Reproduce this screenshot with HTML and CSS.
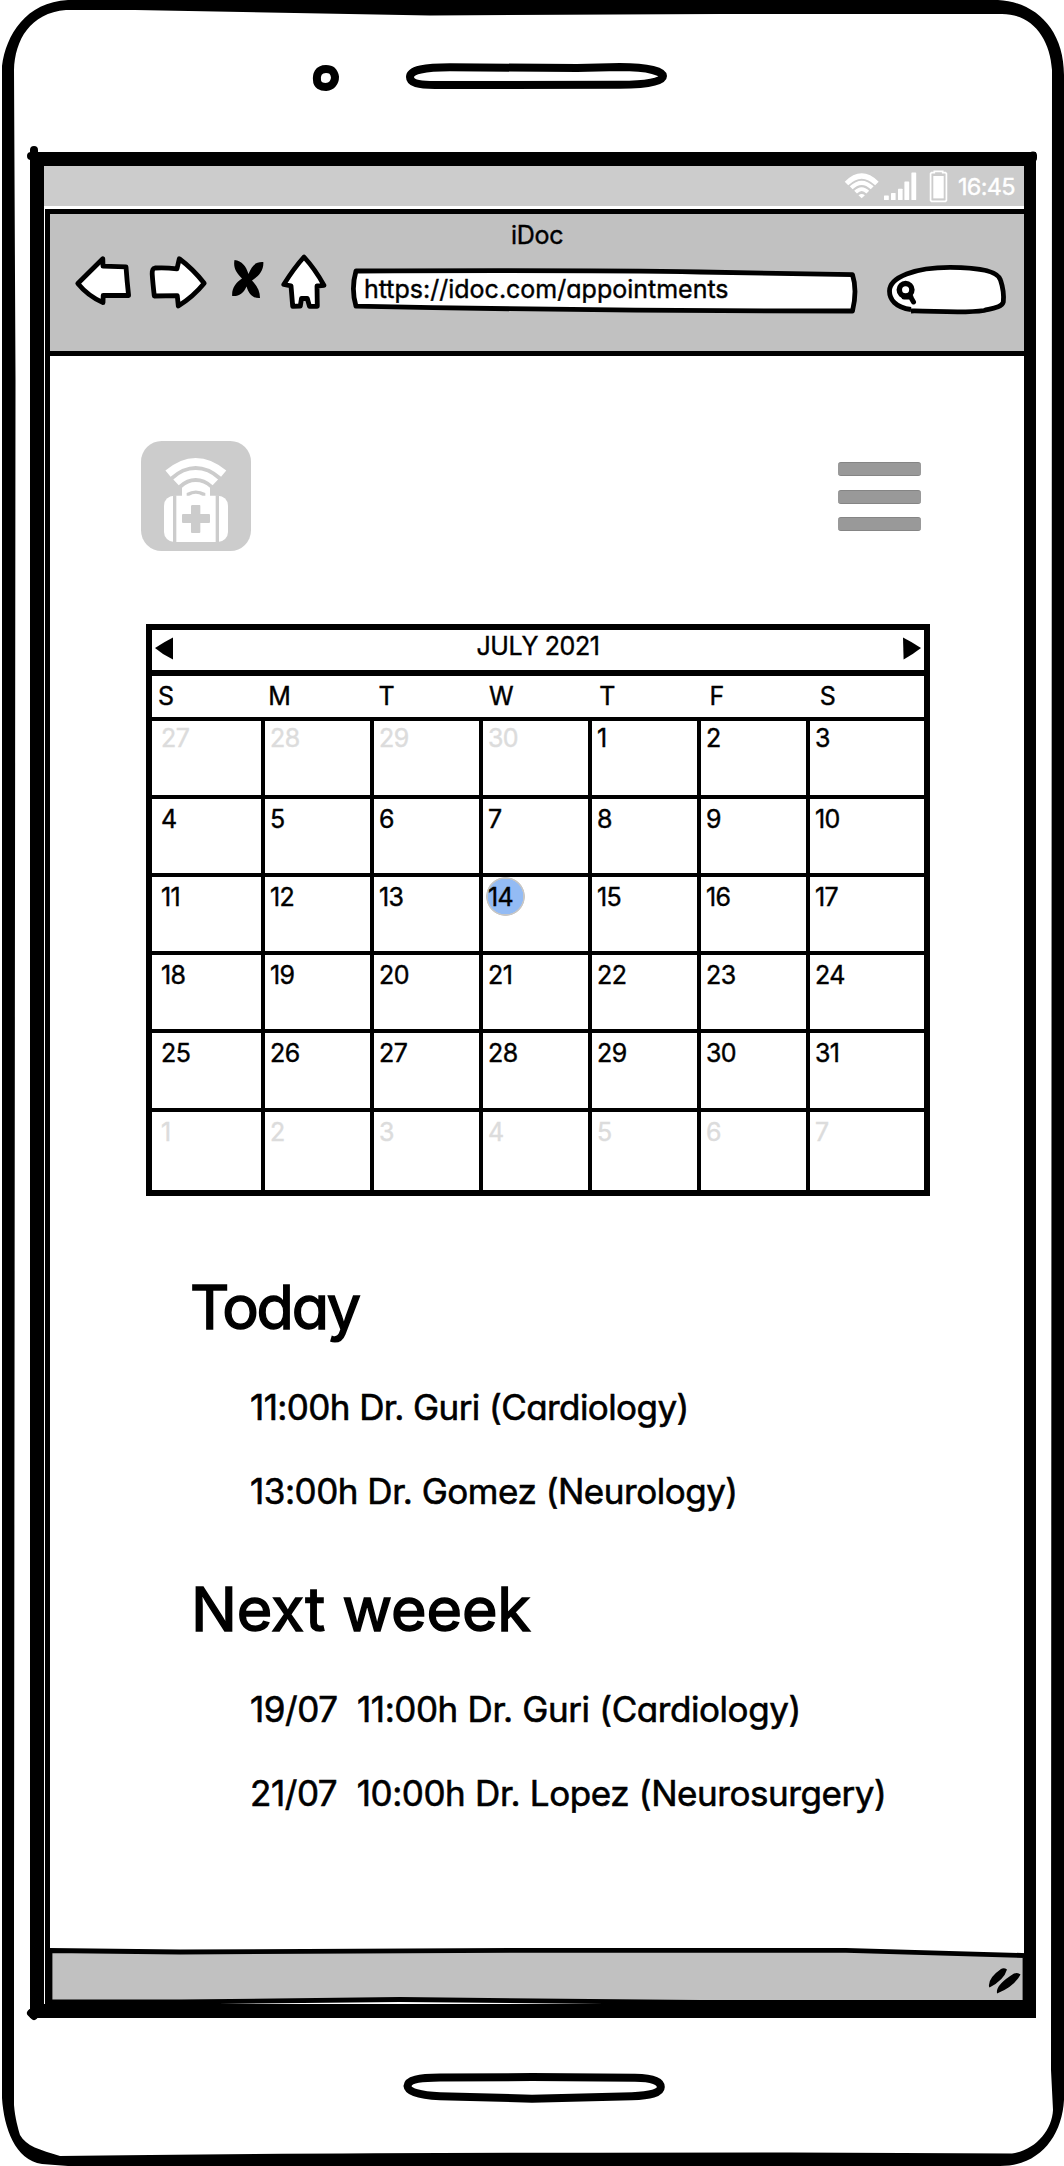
FILE: index.html
```html
<!DOCTYPE html>
<html lang="en">
<head>
<meta charset="utf-8">
<title>iDoc</title>
<link rel="stylesheet" href="styles.css">
</head>
<body>
<div class="phone">
  <div class="screen">
    <div class="status">
      <svg class="wifi" viewBox="844 166 36 40" fill="none" stroke="#fff"><path d="M846.500 183.500Q861.700 168.500 876.900 183.500" stroke-width="5"/><path d="M851.200 187.800Q861.700 178 872.200 187.800" stroke-width="4.200"/><path d="M855.600 192.200Q861.700 186 867.800 192.200" stroke-width="3.800"/><path d="M858.500 195.300Q861.700 192.500 864.900 195.300L861.700 198.300Z" fill="#fff" stroke="none"/></svg>
      <svg class="signal" viewBox="884 166 33 40" fill="#fff"><rect x="884" y="195.500" width="4.800" height="4.500" rx=".6"/><rect x="891" y="193" width="4.600" height="7" rx=".6"/><rect x="898" y="188.700" width="4.600" height="11.300" rx=".6"/><rect x="904.400" y="181.500" width="4.800" height="18.500" rx=".6"/><rect x="911.400" y="172.500" width="4.800" height="27.500" rx=".6"/></svg>
      <svg class="battery" viewBox="929 166 19 40"><path d="M931.500 172.700H934.300V171.300H942.700V172.700H945.500L946.400 173.600V200.300L945.500 201.300H931.500L930.600 200.300V173.600Z" fill="none" stroke="#fff" stroke-width="1.700"/><rect x="933.300" y="176" width="10.400" height="22.400" fill="#fff"/></svg>
      <span class="clock">16:45</span>
    </div>
    <div class="browser">
      <header class="chrome">
        <div class="page-title">iDoc</div>
        <div class="toolbar">
          <svg class="back" viewBox="74 254 58 64"><path d="M77.800 283.500L102.800 258.700L103 266.200L126 266.800Q127 281 128.600 295.500L103.200 295.300L103 302.600Q88 296 77.800 283.500Z"/></svg>
          <svg class="forward" viewBox="148 254 60 64"><path d="M155 268Q165 267.300 177 268.800L179.300 258.800Q193 269 204.200 283.300Q193 297 178.300 306L177.300 295.700L154.300 296Q152.800 283 152.200 274Q152 268.500 155 268Z"/></svg>
          <svg class="stop" viewBox="230 254 36 64"><path d="M234.500 260C242 261 246 266 248.500 274C252 265 256 261.500 263.300 262C264 270 259 276 252 280.500C257 286 260 291 260 298C252.500 298.500 249 294 246.500 286.500C243 294 239 296.500 232.200 296C231.500 288 236 282.500 242 278.500C236.500 273 233 268 234.500 260Z"/></svg>
          <svg class="home" viewBox="280 254 48 64"><path d="M304 257Q294 268 283.800 284.500L291 285.800L292.700 306.300L300.300 306L301.500 298.500H307.300L309.500 306.300H317.300L317 286L324 285.300Q315 269 304 257Z"/></svg>
          <div class="address">
            <svg viewBox="350 254 510 64"><path d="M356 271Q590 270 700 272L852.500 274.700Q857.500 290 852.500 311Q600 311 356 306.200Q350.800 289 356 271Z"/></svg>
            <span>https://idoc.com/appointments</span>
          </div>
          <svg class="search" viewBox="886 254 122 64"><path d="M911 309.500C895 307.500 889.500 299 889.500 291C889.500 277 915 267.300 950 267.300C978 267.300 998 271 1000.500 280C1003.500 289 1003.800 297 1003.300 302C1002 307.500 992 308.500 984 310.500C962 314 930 310.500 911 311"/><circle cx="905.600" cy="289.800" r="6.300"/><path class="handle" d="M904 297H911M909.500 295L913.500 302"/></svg>
        </div>
      </header>
      <main class="page">
        <div class="brand">
          <svg class="logo" viewBox="63 63 330 330"><rect x="63" y="63" width="330" height="330" rx="62" fill="#ccc"/><g fill="none" stroke="#fff" stroke-width="24"><path d="M144 161Q185 126 227 126Q270 126 311 161"/><path d="M168 187Q195 162 227 162Q259 162 286 187"/></g><path d="M186 228V203Q204 186 227 186Q252 186 270 203V228H256V219Q227 204 200 219V228Z" fill="#fff"/><path d="M207 228Q227 215 248 228Z" fill="#fff"/><rect x="132" y="227" width="192" height="139" rx="30" fill="#fff"/><path d="M164 226V368M292 226V368" stroke="#ccc" stroke-width="10"/><path d="M216 255H239Q241 255 241 257V282H267Q270 282 270 285V306Q270 309 267 309H241V336Q241 339 238 339H216Q213 339 213 336V309H189Q186 309 186 306V285Q186 282 189 282H213V257Z" fill="#ccc"/></svg>
          <div class="menu"><i></i><i></i><i></i></div>
        </div>
        <section class="calendar">
          <div class="month"><svg viewBox="0 0 18 23"><path d="M0 11Q9 5 18 0.500V22.500Q8 18 0 11Z"/></svg><span>JULY 2021</span><svg viewBox="0 0 18 23"><path d="M18 11Q9 5 0 0.500L.6 22.500Q9 18 18 11Z"/></svg></div>
          <div class="weekdays"><span>S</span><span>M</span><span>T</span><span>W</span><span>T</span><span>F</span><span>S</span></div>
          <div class="days">
            <div class="off">27</div><div class="off">28</div><div class="off">29</div><div class="off">30</div><div>1</div><div>2</div><div>3</div>
            <div>4</div><div>5</div><div>6</div><div>7</div><div>8</div><div>9</div><div>10</div>
            <div>11</div><div>12</div><div>13</div><div class="today">14</div><div>15</div><div>16</div><div>17</div>
            <div>18</div><div>19</div><div>20</div><div>21</div><div>22</div><div>23</div><div>24</div>
            <div>25</div><div>26</div><div>27</div><div>28</div><div>29</div><div>30</div><div>31</div>
            <div class="off">1</div><div class="off">2</div><div class="off">3</div><div class="off">4</div><div class="off">5</div><div class="off">6</div><div class="off">7</div>
          </div>
        </section>
        <section class="agenda">
          <h2 class="now">Today</h2>
          <p>11:00h Dr. Guri (Cardiology)</p>
          <p class="loose">13:00h Dr. Gomez (Neurology)</p>
        </section>
        <section class="agenda">
          <h2>Next weeek</h2>
          <p class="dated">19/07  11:00h Dr. Guri (Cardiology)</p>
          <p class="dated">21/07  10:00h Dr. Lopez (Neurosurgery)</p>
        </section>
      </main>
      <footer class="bottom-bar">
        <svg viewBox="45 1940 980 70"><path d="M50 1950.500L180 1952Q350 1951.500 532 1950.300L846 1950.300L1025 1955.500V2002.500H700Q500 2001 400 1999.500Q300 2001 180 2002H50Z" fill="#c1c1c1" stroke="#000" stroke-width="4.800"/><path d="M989 1986.500Q988 1978 1001 1969Q1004 1967.500 1007 1969.500Q1004 1980 989.500 1987.500ZM997 1993Q995.500 1985 1014 1973.500Q1018 1972 1020.500 1974.500Q1014 1987 997 1993.500Z"/></svg>
      </footer>
    </div>
  </div>
  <svg class="frame" viewBox="0 0 1064 2166">
    <path fill-rule="evenodd" d="M68 0H998C1036 2 1064 30 1064 75V2100C1062 2136 1040 2166 1000 2166H68L42 2164C15 2160 4 2128 2 2098V66C6 35 26 2 68 0ZM66 10C30 13 15 40 14 70L15.500 380L14 1900V2105C15 2118 18 2128 20 2135C26 2146 40 2150 60 2156Q300 2152.500 790 2152.500L1012 2153.500C1036 2150 1052 2130 1053 2110L1051 2070L1052 70C1050 38 1032 14 1002 14H720L430 15.500L135 10Z"/>
    <g fill="none" stroke="#000" stroke-width="8">
      <path d="M326 69C318 69 316.500 75 317 80C317 85 321 87 326 87C332 86.500 335 82 335 77C334 71 331 69 326 69Z"/>
      <path d="M410 77C410 70 425 67.300 450 67.300L577 68L620 67C650 67 663 72 663 76C663 82 645 84.800 620 84.800L435 85C418 85 410 83 410 77Z"/>
      <path d="M407.500 2086C408 2080 418 2077.800 440 2077.600L532 2077L635 2077.800C652 2078 660.800 2081 660.800 2087C660.800 2093 650 2095.500 632 2096.200L532 2098.700L440 2096.200C420 2095.500 408 2092 407.500 2086Z"/>
    </g>
    <path d="M34 150V156H31M31 2013L34 2016M1033 155.500V158" fill="none" stroke="#000" stroke-width="8" stroke-linecap="round"/>
  </svg>
</div>
</body>
</html>
```

FILE: styles.css
```css
* { box-sizing: border-box; margin: 0; padding: 0; }
body {
  background: #fff;
  color: #000;
  font: 25px "Inter", "Liberation Sans", sans-serif;
  font-feature-settings: "cv11";
  -webkit-text-stroke: .4px currentColor;
}
svg { display: block; flex: none; }
.phone { position: relative; width: 1064px; height: 2166px; padding: 152px 28px 148px 30px; overflow: hidden; }
.frame { position: absolute; inset: 0; width: 1064px; height: 2166px; pointer-events: none; }
.screen { height: 1866px; border: solid #000; border-width: 14px 12px 14px 14px; display: flex; flex-direction: column; }

.status { height: 40px; background: #ccc; color: #fff; display: flex; align-items: center; justify-content: flex-end; padding-right: 8px; }
.status svg { height: 40px; }
.wifi { width: 36px; }
.signal { width: 33px; margin-left: 4px; }
.battery { width: 19px; margin-left: 12px; }
.clock { font-size: 23.500px; letter-spacing: -.7px; line-height: 40px; padding-top: 1px; margin-left: 10px; width: 58px; }

.browser { flex: 1; min-height: 0; margin: 3px 0 0 1px; border: solid #000; border-width: 5px 0 0 5px; display: flex; flex-direction: column; }
.chrome { height: 142px; background: #c1c1c1; border-bottom: 5px solid #000; }
.page-title { height: 40px; line-height: 43px; padding-left: 461px; letter-spacing: -.3px; }
.toolbar { display: flex; padding-left: 24px; }
.toolbar svg { height: 64px; fill: #fff; stroke: #000; stroke-width: 4.800px; stroke-linejoin: round; }
.back { width: 58px; }
.forward { width: 60px; margin-left: 16px; }
.toolbar .stop { width: 36px; margin-left: 22px; fill: #000; stroke-width: 0; }
.home { width: 48px; margin-left: 14px; }
.address { display: grid; width: 510px; margin-left: 22px; }
.address > * { grid-area: 1 / 1; }
.address svg { width: 510px; }
.address span { padding: 5px 0 0 14px; line-height: 60px; z-index: 1; letter-spacing: 0; }
.search { width: 122px; margin-left: 26px; }
.search circle { stroke-width: 5.500px; }
.search .handle { stroke-width: 5px; stroke-linecap: round; }

.page { flex: 1; min-height: 0; padding: 85px 94px 0 96px; }
.brand { display: flex; justify-content: space-between; align-items: flex-start; height: 183px; margin-left: -5px; padding-right: 9px; }
.logo { width: 110px; height: 110px; }
.menu { display: flex; flex-direction: column; gap: 13.500px; padding-top: 21px; }
.menu i { width: 83px; height: 14px; border-radius: 3px; background: #999; border: solid #858585; border-width: 1px 0; }

.calendar { width: 784px; height: 572px; border: 6px solid #000; display: flex; flex-direction: column; }
.month { height: 46px; border-bottom: 6px solid #000; display: flex; justify-content: space-between; padding: 7px 3px 0; }
.month svg { width: 18px; height: 23px; }
.month span { line-height: 19px; letter-spacing: -.4px; }
.weekdays { height: 45px; border-bottom: 4px solid #000; display: grid; grid-template-columns: repeat(7, 110.300px); padding-left: 6px; line-height: 40px; padding-bottom: 1px; }
.days { flex: 1; display: grid; grid-template: 74px 74px 74px 74px 75px 1fr / 109px repeat(5, 105px) 1fr; gap: 4px; background: #000; }
.days div { background: #fff; line-height: 30px; padding: 5px 0 0 5px; letter-spacing: -.6px; }
.days div:nth-child(7n + 1) { padding-left: 9px; }
.days div:nth-child(-n + 7) { padding-top: 2px; }
.days .off { color: #dcdcdc; }
.days .today { background: radial-gradient(circle at 22.500px 19.500px, #93bbf4 17.500px, #c6c6c6 18px 19px, transparent 19.700px) #fff; }

.agenda { height: 302px; padding-left: 44px; }
.calendar + .agenda { margin-top: 69px; }
.agenda h2 { font-size: 61px; font-weight: 400; line-height: 84px; height: 100px; -webkit-text-stroke-width: 1.500px; letter-spacing: -.1px; padding-left: 1px; }
.agenda .now { letter-spacing: -2.300px; padding-left: 0; }
.agenda p { font-size: 35px; line-height: 84px; padding-left: 60px; letter-spacing: -.58px; -webkit-text-stroke-width: .6px; white-space: pre; }
.agenda .loose { letter-spacing: -.47px; }
.agenda .dated { letter-spacing: -.43px; word-spacing: .3px; }

.bottom-bar { height: 64px; margin-left: -5px; }
.bottom-bar svg { width: 980px; height: 70px; overflow: visible; }
```
